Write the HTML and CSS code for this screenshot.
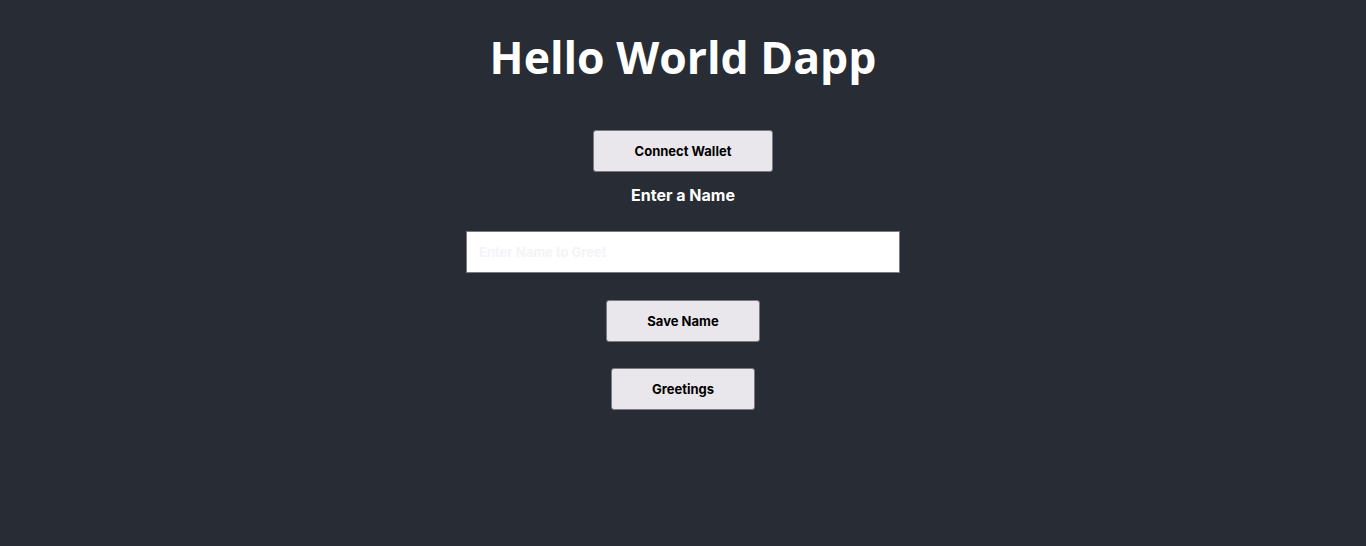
FILE: index.html
```html
<!DOCTYPE html>
<html>
<head>
<meta charset="utf-8">
<link rel="stylesheet" href="styles.css">
</head>
<body>
<div class="app">
  <h1 class="title">Hello World Dapp</h1>
  <button class="btn btn-connect">Connect Wallet</button>
  <label class="label">Enter a Name</label>
  <input class="name-input" type="text" placeholder="Enter Name to Greet">
  <button class="btn btn-save">Save Name</button>
  <button class="btn btn-greet">Greetings</button>
</div>
</body>
</html>
```
FILE: styles.css
```css
html, body {
  margin: 0;
  padding: 0;
  background: #282c34;
  height: 100%;
}
.app {
  display: flex;
  flex-direction: column;
  align-items: center;
  font-family: "Inter", "Roboto", sans-serif;
}
.title {
  font-family: "Open Sans", sans-serif;
  font-weight: 700;
  font-size: 44.5px;
  color: #ffffff;
  margin: 20px 0 0 0;
  line-height: 74px;
}
.btn {
  font-family: "Inter", "Roboto", sans-serif;
  font-weight: 700;
  font-size: 13px;
  color: #000;
  background: #e9e7ec;
  border: 1px solid #7b7a84;
  border-radius: 3px;
  height: 42px;
  box-sizing: border-box;
  cursor: pointer;
}
.btn-connect {
  width: 180px;
  margin-top: 36px;
}
.label {
  color: #ffffff;
  font-weight: 700;
  font-size: 16px;
  margin-top: 13px;
  line-height: 20px;
}
.name-input {
  box-sizing: border-box;
  width: 434px;
  height: 42px;
  margin-top: 26px;
  border: 1px solid #7b7a84;
  background: #ffffff;
  padding: 0 12px;
  font-family: "Inter", "Roboto", sans-serif;
  font-weight: 700;
  font-size: 13px;
  outline: none;
}
.name-input::placeholder {
  color: #f4f4f6;
}
.btn-save {
  width: 154px;
  margin-top: 27px;
}
.btn-greet {
  width: 144px;
  margin-top: 26px;
}
```
